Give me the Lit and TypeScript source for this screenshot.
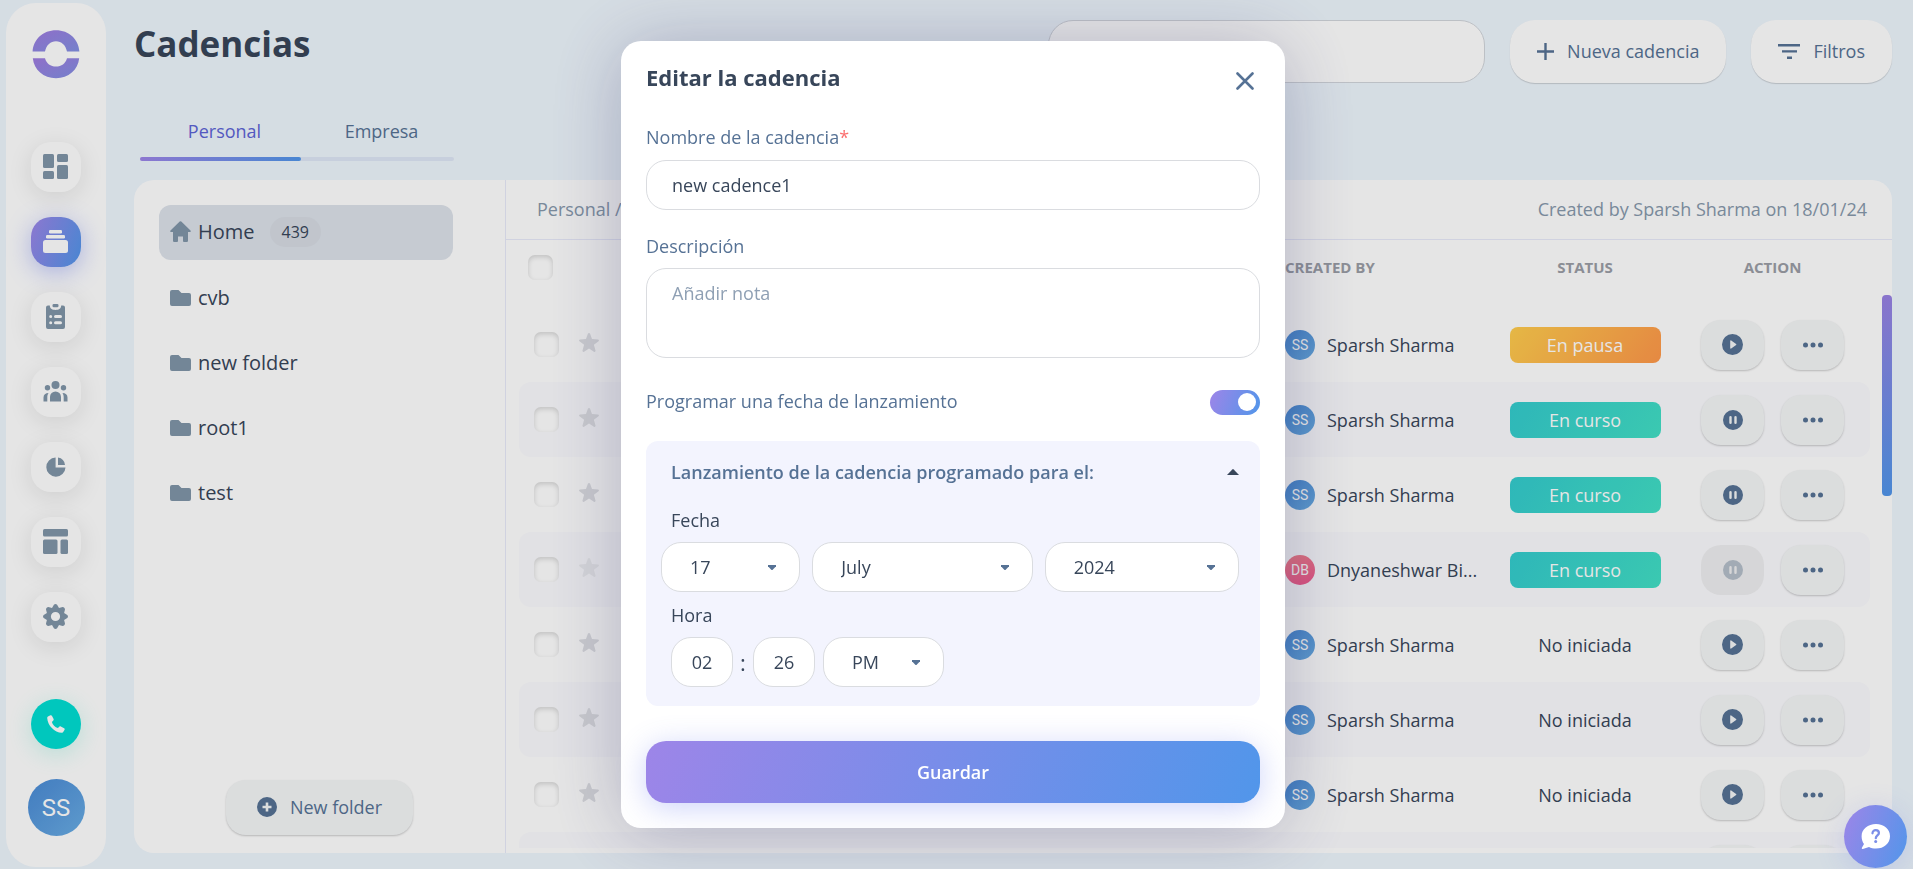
import { LitElement, html, css, svg, nothing } from "lit";
import { customElement, state } from "lit/decorators.js";
import { classMap } from "lit/directives/class-map.js";

type Status = "paused" | "running" | "idle";

interface Cadence {
  initials: string;
  owner: string;
  status?: Status;
  locked?: boolean;
}

const mine = (status: Status): Cadence => ({ initials: "SS", owner: "Sparsh Sharma", status });

const CADENCES: Cadence[] = [
  mine("paused"),
  mine("running"),
  mine("running"),
  { initials: "DB", owner: "Dnyaneshwar Bi...", status: "running", locked: true },
  mine("idle"),
  mine("idle"),
  mine("idle"),
  { initials: "", owner: "" },
];

const STATUS_LABEL: Record<Status, string> = {
  paused: "En pausa",
  running: "En curso",
  idle: "No iniciada",
};

const FOLDERS = ["cvb", "new folder", "root1", "test"];

const icon = (w: number, h: number, body: unknown, viewBox = `0 0 ${w} ${h}`) =>
  html`<svg width=${w} height=${h} viewBox=${viewBox} fill="currentColor" aria-hidden="true">${body}</svg>`;

const ICONS = {
  dashboard: icon(25, 25, svg`
    <rect x="0" y="0" width="11" height="14" rx="1.5"/><rect x="0" y="17" width="11" height="8" rx="1.5"/>
    <rect x="14" y="0" width="11" height="8" rx="1.5"/><rect x="14" y="11" width="11" height="14" rx="1.5"/>`),
  cadences: icon(25, 23, svg`
    <rect x="6" y="0" width="13" height="3.4" rx="1.2"/><rect x="3" y="5" width="19" height="3.4" rx="1.2"/>
    <rect x="0" y="10" width="25" height="13" rx="2.5"/>`),
  tasks: icon(19, 25, svg`
    <rect x="6.5" y="0" width="6" height="3.2" rx="1.3"/>
    <path fill-rule="evenodd" d="M2 1.6h1.8C4 4.6 5.6 6 9.500 6s5.500-1.400 5.700-4.400H17a2 2 0 0 1 2 2V23a2 2 0 0 1-2 2H2a2 2 0 0 1-2-2V3.600a2 2 0 0 1 2-2ZM4.700 11a1.500 1.500 0 1 0 0 3 1.500 1.500 0 0 0 0-3Zm4.800 0a1.500 1.500 0 0 0 0 3h5a1.500 1.500 0 0 0 0-3ZM4.700 17.300a1.500 1.500 0 1 0 0 3 1.500 1.500 0 0 0 0-3Zm4.800 0a1.500 1.500 0 0 0 0 3h5a1.500 1.500 0 0 0 0-3Z"/>`),
  people: icon(25, 21, svg`
    <circle cx="12.500" cy="4" r="4"/><circle cx="4.500" cy="6.700" r="2.700"/><circle cx="20.500" cy="6.700" r="2.700"/>
    <path d="M7 20.500V16a5.500 5.500 0 0 1 11 0v4.500ZM.5 20.500V16.500c0-3 2-4.500 5-4.500C4.500 13.500 4.300 15 4.300 16.500v4ZM24.500 20.500V16.500c0-3-2-4.500-5-4.500 1 1.500 1.200 3 1.200 4.500v4Z"/>`),
  pie: icon(20, 20, svg`
    <path d="M9.600.5v10H19.500A9.600 9.600 0 1 1 9.600.5Z"/><path d="M12 .6A8.500 8.500 0 0 1 19 8H12Z"/>`),
  layout: icon(25, 25, svg`
    <rect x="0" y="0" width="25" height="7.500" rx="1.500"/><rect x="0" y="10.500" width="14.500" height="14.500" rx="1.500"/>
    <rect x="17.500" y="10.500" width="7.500" height="14.500" rx="1.500"/>`),
  gear: icon(25, 25, svg`
    <path fill-rule="evenodd" d="M10.900.7c.9-.9 2.300-.9 3.200 0l1.900 3.200 3.600-.9c1.400.1 2.300 1 2.400 2.400l-.9 3.600 3.200 1.900c.9.900.9 2.300 0 3.200l-3.200 1.900.9 3.600c-.1 1.400-1 2.300-2.400 2.400l-3.600-.9-1.900 3.200c-.9.900-2.300.9-3.200 0L9 21.100l-3.600.9C4 21.900 3.100 21 3 19.600l.9-3.600L.7 14.100c-.9-.9-.9-2.300 0-3.200L3.900 9 3 5.400C3.100 4 4 3.100 5.400 3L9 3.900ZM12.500 7.900a4.600 4.600 0 1 0 0 9.200 4.600 4.600 0 0 0 0-9.200Z"/>`),
  phone: icon(18, 18, svg`
    <path d="M1 1.600 3.400.3c.6-.3 1.200-.1 1.500.5l1.700 3.300c.3.500.1 1.100-.3 1.500L4.900 6.900c.6 2.600 3.200 5.300 6 6.200l1.400-1.400c.4-.4 1-.5 1.500-.2l3.300 1.700c.6.3.8.9.5 1.500l-1.400 2.400c-.3.500-.8.800-1.300.7C7.500 17.400.6 10.400.2 2.900c0-.5.300-1 .8-1.300Z"/>`),
  home: icon(21, 21, svg`
    <path d="M9.700.6a1.200 1.200 0 0 1 1.600 0l9.200 8.900c.7.700.4 1.500-.6 1.500H18v8.400c0 1-.6 1.600-1.500 1.600h-2.300c-.7 0-1.200-.4-1.200-1.200v-4.200H8v4.200c0 .8-.5 1.200-1.200 1.200H4.500C3.600 21 3 20.400 3 19.400V11H1.100c-1 0-1.300-.8-.6-1.500Z"/>`),
  folder: icon(21, 16, svg`
    <path d="M2 0h6.500l3 3H19a2 2 0 0 1 2 2v9a2 2 0 0 1-2 2H2a2 2 0 0 1-2-2V2a2 2 0 0 1 2-2Z"/>`),
  star: icon(20, 19, svg`
    <path d="M10 0c.5 0 .9.300 1.100.8l1.900 5.300 5.900.3c1 .1 1.400 1.200.6 1.800L14.900 11.800l1.600 5.700c.2 1-.7 1.800-1.600 1.200L10 15.500l-4.900 3.200c-.9.600-1.800-.2-1.600-1.200l1.600-5.700L.5 8.200C-.3 7.600.1 6.500 1.100 6.400L7 6.100 8.900.8C9.100.3 9.500 0 10 0Z"/>`),
  plusCircle: icon(20, 20, svg`
    <path fill-rule="evenodd" d="M10 0a10 10 0 1 0 0 20 10 10 0 0 0 0-20Zm-1.300 5.500h2.600v3.200h3.200v2.600h-3.200v3.200H8.700v-3.200H5.500V8.700h3.200Z"/>`),
  plus: icon(17, 17, svg`<path d="M7.300 0h2.400v7.300H17v2.400H9.700V17H7.300V9.700H0V7.300h7.300Z"/>`),
  filter: icon(22, 15, svg`<path d="M0 0h22v2.400H0ZM4 6.200h15v2.400H4ZM9 12.600h5V15H9Z"/>`),
  play: icon(21, 21, svg`
    <path fill-rule="evenodd" d="M10.500 0a10.500 10.500 0 1 0 0 21 10.500 10.500 0 0 0 0-21ZM8.200 6.900c0-.5.600-.8 1-.5l4.900 3.600c.4.300.4.700 0 1l-4.900 3.600c-.4.300-1 0-1-.5Z"/>`),
  pause: icon(20, 20, svg`
    <path fill-rule="evenodd" d="M10 0a10 10 0 1 0 0 20 10 10 0 0 0 0-20ZM7.500 6a1.200 1.200 0 0 1 1.200 1.200v5.600a1.200 1.200 0 0 1-2.400 0V7.200A1.200 1.200 0 0 1 7.500 6Zm5 0a1.200 1.200 0 0 1 1.200 1.200v5.600a1.200 1.200 0 0 1-2.400 0V7.200A1.200 1.200 0 0 1 12.500 6Z"/>`),
  dots: icon(20, 6, svg`<circle cx="2.500" cy="3" r="2.500"/><circle cx="10" cy="3" r="2.500"/><circle cx="17.500" cy="3" r="2.500"/>`),
  search: icon(20, 20, svg`
    <circle cx="8" cy="8" r="6.800" fill="none" stroke="currentColor" stroke-width="2.400"/>
    <path d="m13 13 6 6" stroke="currentColor" stroke-width="2.400" stroke-linecap="round"/>`),
  close: icon(18, 18, svg`<path d="M1.500 1.500l15 15M16.500 1.500l-15 15" stroke="currentColor" stroke-width="2.600" stroke-linecap="round"/>`),
  caretDown: icon(8, 5, svg`<path d="M0 0h8v1.200L4.700 4.700a1 1 0 0 1-1.400 0L0 1.200Z"/>`),
  caretUp: icon(12, 6, svg`<path d="M0 6 5.300.4a1 1 0 0 1 1.400 0L12 6Z"/>`),
  help: icon(29, 25, svg`
    <path d="M15 0c8 0 14 5 14 12.200S23 24.500 15 24.500c-2.600 0-5-.5-7-1.500L1.800 24.900c-.8.200-1.300-.5-.9-1.200L3 20C1.500 18 .6 15.200.6 12.200.6 5 7 0 15 0Z"/>
    <path d="M11.500 9.300c0-2 1.400-3.100 3.200-3.100 1.900 0 3.200 1.100 3.200 2.800 0 2.500-3.100 2.500-3.100 5.200" fill="none" stroke="#7b8ee8" stroke-width="2.300" stroke-linecap="round"/>
    <circle cx="14.700" cy="17.600" r="1.500" fill="#7b8ee8"/>`),
};

const logo = html`<svg width="48" height="49" viewBox="0 0 48 49" role="img" aria-label="Inicio">
  <defs>
    <linearGradient id="lg" x1="0" y1="0" x2="1" y2="1">
      <stop offset="0" stop-color="#a07ce0" /><stop offset="1" stop-color="#8290e2" />
    </linearGradient>
  </defs>
  <path fill="url(#lg)" d="M.6 21.500C1.400 9.300 11 .3 24 .3s22.600 9 23.400 21.200H35C33.500 15 29.500 11.300 24 11.300S14.500 15 13 21.500Z" />
  <path fill="url(#lg)" d="M.8 28.200H13C14.500 33.500 18.500 36.500 24 36.500s9.500-3 11-8.300H47.200C46 39.800 36.500 48.200 24 48.200S2 39.800.8 28.200Z" />
</svg>`;

@customElement("app-root")
export class AppRoot extends LitElement {
  @state() private scheduled = true;
  @state() private open = true;

  static styles = css`
    :host {
      display: block;
      --ink: #38465a;
      --steel: #567295;
      --muted: #8799ac;
      --line: #e8eafa;
      --grad: linear-gradient(110deg, #9d85e8, #5196ea);
      color: var(--ink);
      font: 18px/24px "Open Sans", "Noto Sans", sans-serif;
    }
    * {
      box-sizing: border-box;
    }
    button, input, select, textarea {
      font: inherit;
      color: inherit;
      margin: 0;
    }
    button {
      border: 0;
      padding: 0;
      background: none;
      cursor: pointer;
    }
    svg {
      display: block;
      flex: none;
    }
    h1, h2, h3 {
      margin: 0;
    }
    .shell {
      display: flex;
      gap: 28px;
      height: 100vh;
      min-height: 760px;
      padding: 3px 21px 2px 6px;
      background: #eef6fd;
      overflow: hidden;
    }
    .side {
      flex: none;
      width: 100px;
      display: flex;
      flex-direction: column;
      align-items: center;
      padding: 27px 0 31px;
      border-radius: 30px;
      background: #fff;
    }
    .nav {
      display: grid;
      gap: 25px;
      margin: 63px 0 auto;
    }
    .nav-item {
      width: 50px;
      height: 50px;
      display: grid;
      place-items: center;
      padding: 0 1px 1px 0;
      border-radius: 20px;
      background: #fff;
      color: #8196a9;
      box-shadow: 0 5px 25px rgba(0, 0, 0, 0.1);
    }
    .nav-item.active {
      background: var(--grad);
      color: #fff;
      box-shadow: 0 5px 25px rgba(90, 110, 240, 0.4);
    }
    .call {
      width: 50px;
      height: 50px;
      display: grid;
      place-items: center;
      margin-bottom: 30px;
      border-radius: 50%;
      background: #00ded3;
      color: #fff;
      box-shadow: 0 5px 25px rgba(0, 222, 180, 0.2);
    }
    .avatar {
      display: grid;
      place-items: center;
      flex: none;
      width: 30px;
      height: 30px;
      border-radius: 50%;
      background: linear-gradient(135deg, #4a8ad6, #69ade4);
      color: #fff;
      font: 14px/16px Roboto, sans-serif;
    }
    .avatar.rose {
      background: linear-gradient(160deg, #f2828c, #f2578f);
    }
    .avatar.big {
      width: 57px;
      height: 57px;
      font-size: 24px;
    }
    .main {
      flex: 1;
      min-width: 0;
      display: flex;
      flex-direction: column;
      padding-bottom: 14px;
    }
    .top {
      display: flex;
      align-items: flex-start;
      gap: 25px;
      padding-top: 17px;
    }
    .top h1 {
      flex: 1;
      font-size: 35px;
      line-height: 48px;
      font-weight: 700;
    }
    .search {
      width: 437px;
      height: 63px;
      display: flex;
      align-items: center;
      gap: 16px;
      padding: 0 24px;
      border: 1px solid #d2d6dc;
      border-radius: 25px;
      background: #fff;
      color: #3f5f8f;
    }
    .search input {
      flex: 1;
      min-width: 0;
      border: 0;
      background: none;
      outline: 0;
    }
    .pill {
      display: flex;
      align-items: center;
      gap: 13px;
      height: 63px;
      padding: 0 27px 1px;
      border-radius: 25px;
      background: #fff;
      color: var(--steel);
      font-weight: 500;
      box-shadow: 0 1px 1px rgba(0, 0, 0, 0.16);
    }
    .tabs {
      width: 314px;
      margin: 32px 0 19px 6px;
    }
    .tab-row {
      display: grid;
      grid-template-columns: 161px 1fr;
      padding-bottom: 11px;
    }
    .tab {
      height: 31px;
      padding-left: 8px;
      color: var(--steel);
      font-weight: 500;
    }
    .tab.active {
      color: #5d64d6;
    }
    .track {
      height: 4px;
      border-radius: 2px;
      background: #dee7f6;
    }
    .thumb {
      width: 161px;
      height: 4px;
      border-radius: 2px;
      background: var(--grad);
    }
    .panel {
      flex: 1;
      min-height: 0;
      display: flex;
      border-radius: 20px;
      background: #fff;
      overflow: hidden;
    }
    .folders {
      flex: none;
      width: 372px;
      display: flex;
      flex-direction: column;
      padding: 25px 52px 18px 25px;
      border-right: 1px solid var(--line);
    }
    .folder {
      display: flex;
      align-items: center;
      gap: 7px;
      height: 55px;
      margin-bottom: 10px;
      padding: 0 11px;
      border-radius: 12px;
      font-size: 20px;
      text-align: left;
    }
    .folder svg {
      color: #8196a9;
    }
    .folder.home {
      padding-bottom: 2px;
      background: #dde2ea;
    }
    .count {
      margin-left: 8px;
      padding: 0 12px;
      border-radius: 15px;
      background: #d7dce4;
      font-size: 16px;
      line-height: 30px;
    }
    .new-folder {
      align-self: center;
      display: flex;
      align-items: center;
      gap: 13px;
      height: 55px;
      margin: auto -27px 0 0;
      padding: 0 31px 2px;
      border-radius: 20px;
      background: #f4f6f7;
      color: var(--steel);
      box-shadow: 0 1px 2px rgba(0, 0, 0, 0.2);
    }
    .list {
      flex: 1;
      min-width: 0;
      display: flex;
      flex-direction: column;
      padding-bottom: 5px;
    }
    .crumbs {
      flex: none;
      display: flex;
      justify-content: space-between;
      align-items: center;
      height: 60px;
      padding: 0 25px 2px 31px;
      border-bottom: 1px solid var(--line);
      color: var(--muted);
    }
    .scroll {
      flex: 1;
      min-height: 0;
      display: flex;
      align-items: flex-start;
      justify-content: space-between;
      gap: 12px;
      padding-left: 13px;
      overflow: hidden;
    }
    .bar {
      flex: none;
      width: 10px;
      height: 201px;
      margin-top: 55px;
      border-radius: 4px;
      background: linear-gradient(170deg, #9a82e4, #5196ea);
    }
    table {
      flex: 1;
      min-width: 0;
      table-layout: fixed;
      border-collapse: separate;
      border-spacing: 0;
    }
    th {
      height: 67px;
      padding: 0 0 13px;
      font-size: 15px;
      font-weight: 700;
      color: #9b9ea6;
      text-align: center;
    }
    th.left {
      text-align: left;
    }
    th.check {
      padding-left: 9px;
    }
    td {
      height: 75px;
      padding: 0;
    }
    tbody tr:nth-child(even) td {
      background: #fbfbfe;
    }
    td:first-child {
      border-radius: 12px 0 0 12px;
      padding-left: 15px;
    }
    td:last-child {
      border-radius: 0 12px 12px 0;
    }
    .c-check { width: 60px; }
    .c-star { width: 60px; }
    .c-owner { width: 210px; }
    .c-status { width: 180px; }
    .c-action { width: 195px; }
    .tick {
      appearance: none;
      display: block;
      width: 25px;
      height: 25px;
      border-radius: 7px;
      background: #fff;
      box-shadow: inset 0 2px 5px rgba(0, 0, 0, 0.16);
    }
    .star {
      display: block;
      color: #dfe0e4;
      padding-bottom: 5px;
    }
    .star.faint {
      opacity: 0.5;
    }
    .owner {
      display: flex;
      align-items: center;
      gap: 12px;
      white-space: nowrap;
    }
    .status {
      width: 151px;
      margin: 0 auto;
      border-radius: 8px;
      line-height: 36px;
      text-align: center;
      font-weight: 500;
    }
    .status.paused {
      background: linear-gradient(125deg, #ffcd4d, #ff984a);
      color: #fff;
    }
    .status.running {
      background: linear-gradient(125deg, #34ccce, #42e0c6);
      color: #fff;
    }
    .actions {
      display: flex;
      justify-content: center;
      gap: 17px;
    }
    .act {
      width: 63px;
      height: 50px;
      display: grid;
      place-items: center;
      border-radius: 20px;
      background: #f4f6f7;
      color: var(--steel);
      box-shadow: 0 1px 2px rgba(0, 0, 0, 0.2);
    }
    .act:disabled {
      background: #efeff1;
      color: #b5bfca;
      box-shadow: none;
    }
    .overlay {
      position: fixed;
      inset: 0;
      display: grid;
      place-items: center;
      padding-right: 7px;
      background: rgba(0, 0, 0, 0.1);
    }
    .modal {
      width: 664px;
      padding: 24px 25px 25px;
      border-radius: 20px;
      background: #fff;
      box-shadow: 0 5px 75px rgba(40, 40, 100, 0.28);
    }
    .modal-head {
      display: flex;
      justify-content: space-between;
      align-items: flex-start;
      padding-right: 6px;
    }
    .modal-head h2 {
      font-size: 22px;
      line-height: 24px;
      font-weight: 700;
    }
    .close {
      padding: 7px 0 0;
      color: var(--steel);
    }
    .label {
      display: block;
      color: var(--steel);
      font-weight: 500;
    }
    .name-label {
      margin: 35px 0 11px;
    }
    .desc-label {
      margin: 24px 0 10px;
    }
    .req {
      color: #fb6f6f;
    }
    .field {
      display: block;
      width: 100%;
      height: 50px;
      padding: 0 25px;
      border: 1px solid #dadce0;
      border-radius: 20px;
      background: #fff;
      outline: 0;
    }
    textarea.field {
      height: 90px;
      padding: 12px 25px;
      resize: none;
    }
    textarea::placeholder {
      color: #8fa0b4;
      opacity: 1;
    }
    .switch-row {
      display: flex;
      justify-content: space-between;
      align-items: center;
      margin: 31px 0 26px;
      color: var(--steel);
    }
    .switch-row label {
      padding-bottom: 2px;
    }
    .switch {
      appearance: none;
      display: flex;
      width: 50px;
      height: 25px;
      padding: 3px 4px;
      border-radius: 13px;
      background: #ccd3dc;
    }
    .switch::before {
      content: "";
      width: 18px;
      height: 18px;
      border-radius: 50%;
      background: #fff;
    }
    .switch:checked {
      justify-content: flex-end;
      background: var(--grad);
    }
    .schedule {
      padding: 19px 21px 19px 15px;
      border-radius: 12px;
      background: #f3f4fe;
    }
    .schedule-head {
      display: flex;
      justify-content: space-between;
      align-items: center;
      width: 100%;
      padding-left: 10px;
      color: var(--steel);
      font-weight: 600;
    }
    .schedule-head svg {
      color: var(--ink);
    }
    .group {
      margin: 0;
      padding: 0;
      border: 0;
    }
    .legend {
      padding: 0 0 10px 10px;
      font-weight: 500;
    }
    .date .legend {
      padding-top: 24px;
    }
    .time .legend {
      padding-top: 11px;
    }
    .row {
      display: grid;
      gap: 12px;
      grid-template-columns: 139fr 220fr 194fr;
    }
    .time .row {
      display: flex;
      align-items: center;
      gap: 8px;
      padding-left: 10px;
    }
    .pick {
      display: grid;
      align-items: center;
    }
    .pick select {
      grid-area: 1 / 1;
      appearance: none;
      width: 100%;
      height: 50px;
      padding: 0 28px;
      border: 1px solid #dadce0;
      border-radius: 20px;
      background: #fff;
      outline: 0;
    }
    .pick svg {
      grid-area: 1 / 1;
      justify-self: end;
      margin-right: 24px;
      color: var(--steel);
      pointer-events: none;
    }
    .time .pick {
      width: 121px;
    }
    .two {
      width: 62px;
      padding: 0;
      text-align: center;
    }
    .colon {
      width: 4px;
      display: flex;
      justify-content: center;
      font-size: 22px;
    }
    .save {
      display: block;
      width: 100%;
      height: 62px;
      margin-top: 35px;
      border-radius: 20px;
      background: var(--grad);
      color: #fff;
      font-weight: 600;
      box-shadow: 0 5px 30px rgba(90, 110, 240, 0.3);
    }
    .help {
      position: fixed;
      right: 6px;
      bottom: 1px;
      width: 63px;
      height: 63px;
      display: grid;
      place-items: center;
      border-radius: 50%;
      background: var(--grad);
      color: #fff;
      box-shadow: 0 5px 30px rgba(90, 110, 240, 0.2);
    }
  `;

  private navItem(name: keyof typeof ICONS, label: string, active = false) {
    return html`<a class=${classMap({ "nav-item": true, active })} href="#" aria-label=${label}>${ICONS[name]}</a>`;
  }

  private row(c: Cadence) {
    return html`<tr>
      <td><input class="tick" type="checkbox" aria-label="Seleccionar" /></td>
      <td><button class=${classMap({ star: true, faint: !!c.locked })} aria-label="Favorito">${ICONS.star}</button></td>
      <td></td>
      <td>
        ${c.owner
          ? html`<div class="owner">
              <span class=${classMap({ avatar: true, rose: c.initials === "DB" })}>${c.initials}</span>${c.owner}
            </div>`
          : nothing}
      </td>
      <td>
        ${c.status
          ? html`<div class=${classMap({ status: true, [c.status]: true })}>${STATUS_LABEL[c.status]}</div>`
          : nothing}
      </td>
      <td>
        <div class="actions">
          <button class="act" ?disabled=${!!c.locked} aria-label=${c.status === "running" ? "Pausar" : "Iniciar"}>
            ${c.status === "running" ? ICONS.pause : ICONS.play}
          </button>
          <button class="act" aria-label="Más opciones">${ICONS.dots}</button>
        </div>
      </td>
    </tr>`;
  }

  private pick(label: string, value: string) {
    return html`<div class="pick">
      <select aria-label=${label}><option>${value}</option></select>
      ${ICONS.caretDown}
    </div>`;
  }

  private schedule() {
    return html`<section class="schedule">
      <button class="schedule-head" aria-expanded=${this.open} @click=${() => (this.open = !this.open)}>
        <span>Lanzamiento de la cadencia programado para el:</span>${ICONS.caretUp}
      </button>
      ${this.open
        ? html`<div class="group date" role="group" aria-labelledby="fecha">
              <div class="legend" id="fecha">Fecha</div>
              <div class="row">${this.pick("Día", "17")}${this.pick("Mes", "July")}${this.pick("Año", "2024")}</div>
            </div>
            <div class="group time" role="group" aria-labelledby="hora">
              <div class="legend" id="hora">Hora</div>
              <div class="row">
                <input class="field two" aria-label="Horas" value="02" />
                <span class="colon">:</span>
                <input class="field two" aria-label="Minutos" value="26" />
                ${this.pick("Periodo", "PM")}
              </div>
            </div>`
        : nothing}
    </section>`;
  }

  render() {
    return html`
      <div class="shell">
        <aside class="side">
          ${logo}
          <nav class="nav">
            ${this.navItem("dashboard", "Panel")} ${this.navItem("cadences", "Cadencias", true)}
            ${this.navItem("tasks", "Tareas")} ${this.navItem("people", "Personas")}
            ${this.navItem("pie", "Estadísticas")} ${this.navItem("layout", "Plantillas")}
            ${this.navItem("gear", "Ajustes")}
          </nav>
          <button class="call" aria-label="Llamar">${ICONS.phone}</button>
          <span class="avatar big">SS</span>
        </aside>
        <main class="main">
          <header class="top">
            <h1>Cadencias</h1>
            <label class="search">${ICONS.search}<input type="text" aria-label="Buscar" /></label>
            <button class="pill">${ICONS.plus}Nueva cadencia</button>
            <button class="pill">${ICONS.filter}Filtros</button>
          </header>
          <div class="tabs">
            <div class="tab-row" role="tablist">
              <button class="tab active" role="tab" aria-selected="true">Personal</button>
              <button class="tab" role="tab" aria-selected="false">Empresa</button>
            </div>
            <div class="track"><div class="thumb"></div></div>
          </div>
          <div class="panel">
            <div class="folders">
              <button class="folder home">${ICONS.home}<span>Home</span><span class="count">439</span></button>
              ${FOLDERS.map((f) => html`<button class="folder">${ICONS.folder}<span>${f}</span></button>`)}
              <button class="new-folder">${ICONS.plusCircle}New folder</button>
            </div>
            <div class="list">
              <div class="crumbs"><span>Personal /</span><span>Created by Sparsh Sharma on 18/01/24</span></div>
              <div class="scroll">
                <table>
                  <colgroup>
                    <col class="c-check" /><col class="c-star" /><col />
                    <col class="c-owner" /><col class="c-status" /><col class="c-action" />
                  </colgroup>
                  <thead>
                    <tr>
                      <th class="check"><input class="tick" type="checkbox" aria-label="Seleccionar todo" /></th>
                      <th></th>
                      <th></th>
                      <th class="left">CREATED BY</th>
                      <th>STATUS</th>
                      <th>ACTION</th>
                    </tr>
                  </thead>
                  <tbody>${CADENCES.map((c) => this.row(c))}</tbody>
                </table>
                <div class="bar"></div>
              </div>
            </div>
          </div>
        </main>
      </div>

      <div class="overlay">
        <div class="modal" role="dialog" aria-modal="true" aria-labelledby="title">
          <div class="modal-head">
            <h2 id="title">Editar la cadencia</h2>
            <button class="close" aria-label="Cerrar">${ICONS.close}</button>
          </div>
          <label class="label name-label" for="name">Nombre de la cadencia<span class="req">*</span></label>
          <input class="field" id="name" type="text" value="new cadence1" />
          <label class="label desc-label" for="desc">Descripción</label>
          <textarea class="field" id="desc" placeholder="Añadir nota"></textarea>
          <div class="switch-row">
            <label for="launch">Programar una fecha de lanzamiento</label>
            <input
              class="switch"
              id="launch"
              type="checkbox"
              role="switch"
              .checked=${this.scheduled}
              @change=${(e: Event) => (this.scheduled = (e.target as HTMLInputElement).checked)}
            />
          </div>
          ${this.scheduled ? this.schedule() : nothing}
          <button class="save">Guardar</button>
        </div>
      </div>
      <button class="help" aria-label="Ayuda">${ICONS.help}</button>
    `;
  }
}
